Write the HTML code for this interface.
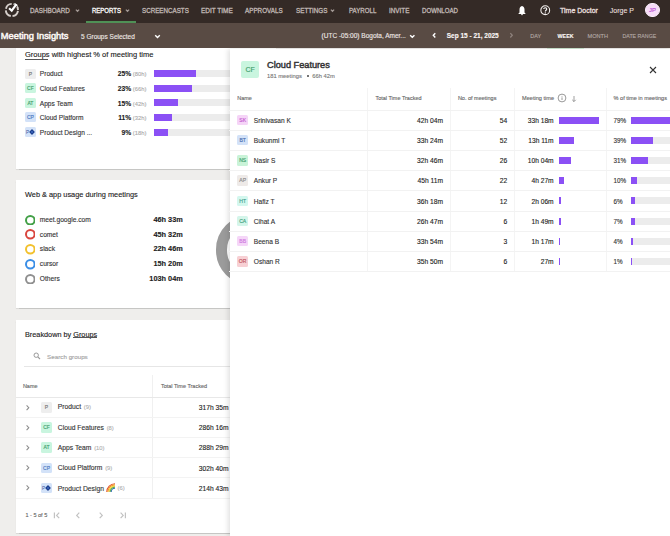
<!DOCTYPE html>
<html><head><meta charset="utf-8">
<style>
*{box-sizing:border-box;margin:0;padding:0}
html,body{width:670px;height:536px;overflow:hidden;background:#efeeec;font-family:"Liberation Sans",sans-serif;color:#222;position:relative}
.abs{position:absolute}
.t{position:absolute;white-space:nowrap;-webkit-text-stroke:0.12px currentColor}
</style></head><body>
<div class="abs" style="left:16.00px;top:40.00px;width:260.00px;height:129.00px;background:#fff;box-shadow:0 0.8px 1px rgba(0,0,0,0.17)"></div>
<div class="abs" style="left:16.00px;top:179.70px;width:260.00px;height:128.40px;background:#fff;box-shadow:0 0.8px 1px rgba(0,0,0,0.17)"></div>
<div class="abs" style="left:16.00px;top:319.70px;width:260.00px;height:213.50px;background:#fff;box-shadow:0 0.8px 1px rgba(0,0,0,0.17)"></div>
<div class="t" style="left:25.00px;top:50.00px;font-size:7.5px;line-height:10px;font-weight:normal;color:#222;">Groups with highest % of meeting time</div>
<div class="abs" style="left:25.00px;top:58.80px;width:23.30px;height:0.75px;background:#555;"></div>
<div class="abs" style="left:24.90px;top:68.60px;width:11px;height:10px;background:#eeeeee;color:#777;font-size:5.0px;line-height:10.6px;text-align:center;border-radius:1.5px;-webkit-text-stroke:0.15px #777">P</div>
<div class="t" style="left:39.80px;top:69.40px;font-size:6.6px;line-height:10px;font-weight:normal;color:#333;">Product</div>
<div class="t" style="right:538.80px;top:69.40px;font-size:6.7px;line-height:10px;font-weight:bold;color:#222;">25%</div>
<div class="t" style="left:132.80px;top:69.40px;font-size:5.8px;line-height:10px;font-weight:normal;color:#aaa;">(80h)</div>
<div class="abs" style="left:154.20px;top:70.10px;width:80.00px;height:7.00px;background:#ececec;"></div>
<div class="abs" style="left:154.20px;top:70.10px;width:41.60px;height:7.00px;background:#8b50f5;"></div>
<div class="abs" style="left:24.90px;top:83.23px;width:11px;height:10px;background:#c9f5df;color:#3f9e6c;font-size:5.0px;line-height:10.6px;text-align:center;border-radius:1.5px;-webkit-text-stroke:0.15px #3f9e6c">CF</div>
<div class="t" style="left:39.80px;top:84.03px;font-size:6.6px;line-height:10px;font-weight:normal;color:#333;">Cloud Features</div>
<div class="t" style="right:538.80px;top:84.03px;font-size:6.7px;line-height:10px;font-weight:bold;color:#222;">23%</div>
<div class="t" style="left:132.80px;top:84.03px;font-size:5.8px;line-height:10px;font-weight:normal;color:#aaa;">(66h)</div>
<div class="abs" style="left:154.20px;top:84.73px;width:80.00px;height:7.00px;background:#ececec;"></div>
<div class="abs" style="left:154.20px;top:84.73px;width:38.10px;height:7.00px;background:#8b50f5;"></div>
<div class="abs" style="left:24.90px;top:97.86px;width:11px;height:10px;background:#c9f5df;color:#3f9e6c;font-size:5.0px;line-height:10.6px;text-align:center;border-radius:1.5px;-webkit-text-stroke:0.15px #3f9e6c">AT</div>
<div class="t" style="left:39.80px;top:98.66px;font-size:6.6px;line-height:10px;font-weight:normal;color:#333;">Apps Team</div>
<div class="t" style="right:538.80px;top:98.66px;font-size:6.7px;line-height:10px;font-weight:bold;color:#222;">15%</div>
<div class="t" style="left:132.80px;top:98.66px;font-size:5.8px;line-height:10px;font-weight:normal;color:#aaa;">(42h)</div>
<div class="abs" style="left:154.20px;top:99.36px;width:80.00px;height:7.00px;background:#ececec;"></div>
<div class="abs" style="left:154.20px;top:99.36px;width:23.80px;height:7.00px;background:#8b50f5;"></div>
<div class="abs" style="left:24.90px;top:112.49px;width:11px;height:10px;background:#d3e2f8;color:#4a78c0;font-size:5.0px;line-height:10.6px;text-align:center;border-radius:1.5px;-webkit-text-stroke:0.15px #4a78c0">CP</div>
<div class="t" style="left:39.80px;top:113.29px;font-size:6.6px;line-height:10px;font-weight:normal;color:#333;">Cloud Platform</div>
<div class="t" style="right:538.80px;top:113.29px;font-size:6.7px;line-height:10px;font-weight:bold;color:#222;">11%</div>
<div class="t" style="left:132.80px;top:113.29px;font-size:5.8px;line-height:10px;font-weight:normal;color:#aaa;">(32h)</div>
<div class="abs" style="left:154.20px;top:113.99px;width:80.00px;height:7.00px;background:#ececec;"></div>
<div class="abs" style="left:154.20px;top:113.99px;width:17.50px;height:7.00px;background:#8b50f5;"></div>
<div class="abs" style="left:24.90px;top:127.12px;width:11px;height:10px;background:#d3e2f8;color:#2d5fc0;font-size:5.0px;line-height:10.6px;text-align:center;border-radius:1.5px;-webkit-text-stroke:0.15px #2d5fc0"><svg width='11' height='10' viewBox='0 0 11 10' style='position:absolute;left:0;top:0'><text x='0.9' y='7.2' font-size='4.6' fill='#3a5a9a' font-family='Liberation Sans'>P</text><path d='M7 2.1 L9.9 5 L7 7.9 L4.1 5 Z' fill='#1c3f8f'/><path d='M7 3.9 L8.1 5 L7 6.1 L5.9 5 Z' fill='#4a78d0'/></svg></div>
<div class="t" style="left:39.80px;top:127.92px;font-size:6.6px;line-height:10px;font-weight:normal;color:#333;">Product Design ...</div>
<div class="t" style="right:538.80px;top:127.92px;font-size:6.7px;line-height:10px;font-weight:bold;color:#222;">9%</div>
<div class="t" style="left:132.80px;top:127.92px;font-size:5.8px;line-height:10px;font-weight:normal;color:#aaa;">(18h)</div>
<div class="abs" style="left:154.20px;top:128.62px;width:80.00px;height:7.00px;background:#ececec;"></div>
<div class="abs" style="left:154.20px;top:128.62px;width:14.20px;height:7.00px;background:#8b50f5;"></div>
<div class="t" style="left:25.00px;top:190.40px;font-size:7.37px;line-height:10px;font-weight:normal;color:#222;">Web &amp; app usage during meetings</div>
<svg class="abs" style="left:24.6px;top:214.70px" width="10.6" height="10.6" viewBox="0 0 10.6 10.6"><circle cx="5.3" cy="5.3" r="4.3" fill="none" stroke="#43a047" stroke-width="2"/></svg>
<div class="t" style="left:39.80px;top:215.10px;font-size:6.67px;line-height:10px;font-weight:normal;color:#333;">meet.google.com</div>
<div class="t" style="right:487.20px;top:215.10px;font-size:7.35px;line-height:10px;font-weight:bold;color:#222;">46h 33m</div>
<svg class="abs" style="left:24.6px;top:229.48px" width="10.6" height="10.6" viewBox="0 0 10.6 10.6"><circle cx="5.3" cy="5.3" r="4.3" fill="none" stroke="#d9463e" stroke-width="2"/></svg>
<div class="t" style="left:39.80px;top:229.77px;font-size:6.67px;line-height:10px;font-weight:normal;color:#333;">comet</div>
<div class="t" style="right:487.20px;top:229.77px;font-size:7.35px;line-height:10px;font-weight:bold;color:#222;">45h 32m</div>
<svg class="abs" style="left:24.6px;top:244.26px" width="10.6" height="10.6" viewBox="0 0 10.6 10.6"><circle cx="5.3" cy="5.3" r="4.3" fill="none" stroke="#f2c12e" stroke-width="2"/></svg>
<div class="t" style="left:39.80px;top:244.44px;font-size:6.67px;line-height:10px;font-weight:normal;color:#333;">slack</div>
<div class="t" style="right:487.20px;top:244.44px;font-size:7.35px;line-height:10px;font-weight:bold;color:#222;">22h 46m</div>
<svg class="abs" style="left:24.6px;top:259.04px" width="10.6" height="10.6" viewBox="0 0 10.6 10.6"><circle cx="5.3" cy="5.3" r="4.3" fill="none" stroke="#3a8ee6" stroke-width="2"/></svg>
<div class="t" style="left:39.80px;top:259.11px;font-size:6.67px;line-height:10px;font-weight:normal;color:#333;">cursor</div>
<div class="t" style="right:487.20px;top:259.11px;font-size:7.35px;line-height:10px;font-weight:bold;color:#222;">15h 20m</div>
<svg class="abs" style="left:24.6px;top:273.82px" width="10.6" height="10.6" viewBox="0 0 10.6 10.6"><circle cx="5.3" cy="5.3" r="4.3" fill="none" stroke="#909090" stroke-width="2"/></svg>
<div class="t" style="left:39.80px;top:273.78px;font-size:6.67px;line-height:10px;font-weight:normal;color:#333;">Others</div>
<div class="t" style="right:487.20px;top:273.78px;font-size:7.35px;line-height:10px;font-weight:bold;color:#222;">103h 04m</div>
<div class="abs" style="left:215.9px;top:215.4px;width:69.6px;height:69.6px;border-radius:50%;border:11.6px solid #9b9b9b"></div>
<div class="t" style="left:25.00px;top:329.50px;font-size:7.3px;line-height:10px;font-weight:normal;color:#222;">Breakdown by Groups</div>
<div class="abs" style="left:73.40px;top:337.40px;width:23.60px;height:0.75px;background:#555;"></div>
<svg class="abs" style="left:33px;top:352px" width="8" height="8" viewBox="0 0 8 8"><circle cx="3.2" cy="3.2" r="2.2" fill="none" stroke="#999" stroke-width="1"/><path d="M4.8 4.8 L7 7" stroke="#999" stroke-width="1.1"/></svg>
<div class="t" style="left:47.10px;top:351.80px;font-size:6.26px;line-height:10px;font-weight:normal;color:#a6a6a6;-webkit-text-stroke:0.15px #a6a6a6">Search groups</div>
<div class="abs" style="left:24.00px;top:366.30px;width:240.00px;height:0.70px;background:#e6e6e6;"></div>
<div class="t" style="left:22.90px;top:381.20px;font-size:5.5px;line-height:10px;font-weight:normal;color:#666;">Name</div>
<div class="t" style="left:160.90px;top:381.20px;font-size:5.5px;line-height:10px;font-weight:normal;color:#666;">Total Time Tracked</div>
<div class="abs" style="left:152.00px;top:374.50px;width:0.70px;height:123.30px;background:#f0f0f0;"></div>
<div class="abs" style="left:16.00px;top:397.10px;width:240.00px;height:0.70px;background:#e8e8e8;"></div>
<svg class="abs" style="left:23.50px;top:403.80px" width="7.4" height="7.4" viewBox="0 0 7.4 7.4"><path d="M2.59 1.295 L4.8100000000000005 3.7 L2.59 6.1049999999999995" fill="none" stroke="#8c8c8c" stroke-width="1.05"/></svg>
<div class="abs" style="left:41.10px;top:402.20px;width:10.8px;height:10.4px;background:#eeeeee;color:#777;font-size:5.0px;line-height:11.0px;text-align:center;border-radius:1.5px;-webkit-text-stroke:0.15px #777">P</div>
<div class="t" style="left:57.8px;top:402.40px;font-size:6.75px;line-height:10px;color:#333">Product <span style="font-size:5.8px;color:#b0b0b0;margin-left:0.8px">(9)</span></div>
<div class="t" style="right:441.50px;top:403.20px;font-size:6.7px;line-height:10px;font-weight:normal;color:#222;">317h 35m</div>
<div class="abs" style="left:16.00px;top:417.10px;width:240.00px;height:0.70px;background:#f3f3f3;"></div>
<svg class="abs" style="left:23.50px;top:423.90px" width="7.4" height="7.4" viewBox="0 0 7.4 7.4"><path d="M2.59 1.295 L4.8100000000000005 3.7 L2.59 6.1049999999999995" fill="none" stroke="#8c8c8c" stroke-width="1.05"/></svg>
<div class="abs" style="left:41.10px;top:422.30px;width:10.8px;height:10.4px;background:#c9f5df;color:#3f9e6c;font-size:5.0px;line-height:11.0px;text-align:center;border-radius:1.5px;-webkit-text-stroke:0.15px #3f9e6c">CF</div>
<div class="t" style="left:57.8px;top:422.50px;font-size:6.75px;line-height:10px;color:#333">Cloud Features <span style="font-size:5.8px;color:#b0b0b0;margin-left:0.8px">(8)</span></div>
<div class="t" style="right:441.50px;top:423.30px;font-size:6.7px;line-height:10px;font-weight:normal;color:#222;">286h 16m</div>
<div class="abs" style="left:16.00px;top:437.20px;width:240.00px;height:0.70px;background:#f3f3f3;"></div>
<svg class="abs" style="left:23.50px;top:444.00px" width="7.4" height="7.4" viewBox="0 0 7.4 7.4"><path d="M2.59 1.295 L4.8100000000000005 3.7 L2.59 6.1049999999999995" fill="none" stroke="#8c8c8c" stroke-width="1.05"/></svg>
<div class="abs" style="left:41.10px;top:442.40px;width:10.8px;height:10.4px;background:#c9f5df;color:#3f9e6c;font-size:5.0px;line-height:11.0px;text-align:center;border-radius:1.5px;-webkit-text-stroke:0.15px #3f9e6c">AT</div>
<div class="t" style="left:57.8px;top:442.60px;font-size:6.75px;line-height:10px;color:#333">Apps Team <span style="font-size:5.8px;color:#b0b0b0;margin-left:0.8px">(10)</span></div>
<div class="t" style="right:441.50px;top:443.40px;font-size:6.7px;line-height:10px;font-weight:normal;color:#222;">288h 29m</div>
<div class="abs" style="left:16.00px;top:457.30px;width:240.00px;height:0.70px;background:#f3f3f3;"></div>
<svg class="abs" style="left:23.50px;top:464.10px" width="7.4" height="7.4" viewBox="0 0 7.4 7.4"><path d="M2.59 1.295 L4.8100000000000005 3.7 L2.59 6.1049999999999995" fill="none" stroke="#8c8c8c" stroke-width="1.05"/></svg>
<div class="abs" style="left:41.10px;top:462.50px;width:10.8px;height:10.4px;background:#d3e2f8;color:#4a78c0;font-size:5.0px;line-height:11.0px;text-align:center;border-radius:1.5px;-webkit-text-stroke:0.15px #4a78c0">CP</div>
<div class="t" style="left:57.8px;top:462.70px;font-size:6.75px;line-height:10px;color:#333">Cloud Platform <span style="font-size:5.8px;color:#b0b0b0;margin-left:0.8px">(9)</span></div>
<div class="t" style="right:441.50px;top:463.50px;font-size:6.7px;line-height:10px;font-weight:normal;color:#222;">302h 40m</div>
<div class="abs" style="left:16.00px;top:477.40px;width:240.00px;height:0.70px;background:#f3f3f3;"></div>
<svg class="abs" style="left:23.50px;top:484.20px" width="7.4" height="7.4" viewBox="0 0 7.4 7.4"><path d="M2.59 1.295 L4.8100000000000005 3.7 L2.59 6.1049999999999995" fill="none" stroke="#8c8c8c" stroke-width="1.05"/></svg>
<div class="abs" style="left:41.10px;top:482.60px;width:10.8px;height:10.4px;background:#d3e2f8;color:#2d5fc0;font-size:5.0px;line-height:11.0px;text-align:center;border-radius:1.5px;-webkit-text-stroke:0.15px #2d5fc0"><svg width='11' height='10' viewBox='0 0 11 10' style='position:absolute;left:0;top:0'><text x='0.9' y='7.2' font-size='4.6' fill='#3a5a9a' font-family='Liberation Sans'>P</text><path d='M7 2.1 L9.9 5 L7 7.9 L4.1 5 Z' fill='#1c3f8f'/><path d='M7 3.9 L8.1 5 L7 6.1 L5.9 5 Z' fill='#4a78d0'/></svg></div>
<div class="t" style="left:57.8px;top:482.80px;font-size:6.75px;line-height:10px;color:#333">Product Design <svg width="9" height="9" viewBox="0 0 9 9" style="vertical-align:-1.5px"><path d="M0.8 9 A8.2 8.2 0 0 1 9 0.8" fill="none" stroke="#e0502a" stroke-width="1.1"/><path d="M1.9 9 A7.1 7.1 0 0 1 9 1.9" fill="none" stroke="#f39a2b" stroke-width="1.1"/><path d="M3 9 A6 6 0 0 1 9 3" fill="none" stroke="#f5d33a" stroke-width="1.1"/><path d="M4.1 9 A4.9 4.9 0 0 1 9 4.1" fill="none" stroke="#5fae4a" stroke-width="1.1"/><path d="M5.2 9 A3.8 3.8 0 0 1 9 5.2" fill="none" stroke="#2f6fb0" stroke-width="1.1"/></svg> <span style="font-size:5.8px;color:#b0b0b0;margin-left:0.8px">(6)</span></div>
<div class="t" style="right:441.50px;top:483.60px;font-size:6.7px;line-height:10px;font-weight:normal;color:#222;">214h 43m</div>
<div class="abs" style="left:16.00px;top:497.50px;width:240.00px;height:0.70px;background:#f3f3f3;"></div>
<div class="t" style="left:25.50px;top:510.10px;font-size:5.5px;line-height:10px;font-weight:normal;color:#666;">1 - 5 of 5</div>
<svg class="abs" style="left:52px;top:511px" width="10" height="9" viewBox="0 0 10 9"><path d="M2.4 1.5 V7.3" stroke="#c2c2c2" stroke-width="1.2"/><path d="M7.2 1.6 L4.6 4.4 L7.2 7.2" fill="none" stroke="#c2c2c2" stroke-width="1.2"/></svg>
<svg class="abs" style="left:74px;top:511px" width="8" height="9" viewBox="0 0 8 9"><path d="M5.3 1.6 L2.7 4.4 L5.3 7.2" fill="none" stroke="#c2c2c2" stroke-width="1.2"/></svg>
<svg class="abs" style="left:96.5px;top:511px" width="8" height="9" viewBox="0 0 8 9"><path d="M2.7 1.6 L5.3 4.4 L2.7 7.2" fill="none" stroke="#c2c2c2" stroke-width="1.2"/></svg>
<svg class="abs" style="left:118px;top:511px" width="10" height="9" viewBox="0 0 10 9"><path d="M7.4 1.5 V7.3" stroke="#c2c2c2" stroke-width="1.2"/><path d="M2.6 1.6 L5.2 4.4 L2.6 7.2" fill="none" stroke="#c2c2c2" stroke-width="1.2"/></svg>
<div class="abs" style="left:229.7px;top:48.5px;width:441px;height:488px;background:#fff;box-shadow:-2px 0 5px rgba(0,0,0,0.12)"></div>
<div class="abs" style="left:241.30px;top:60.95px;width:17.7px;height:17.5px;background:#c9f5df;color:#3f9e6c;font-size:7.0px;line-height:18.1px;text-align:center;border-radius:1.5px;border-radius:2px;-webkit-text-stroke:0.15px #3f9e6c">CF</div>
<div class="t" style="left:267.00px;top:60.20px;font-size:9.2px;line-height:10px;font-weight:normal;color:#333;-webkit-text-stroke:0.45px #333">Cloud Features</div>
<div class="t" style="left:267.00px;top:71.30px;font-size:5.8px;line-height:10px;font-weight:normal;color:#777;">181 meetings</div>
<div class="abs" style="left:306.50px;top:75.20px;width:2.00px;height:2.00px;background:#444;border-radius:50%"></div>
<div class="t" style="left:312.20px;top:71.30px;font-size:5.8px;line-height:10px;font-weight:normal;color:#777;">66h 42m</div>
<svg class="abs" style="left:648.5px;top:66px" width="8" height="8" viewBox="0 0 8 8"><path d="M1 1 L7 7 M7 1 L1 7" stroke="#333" stroke-width="1.1"/></svg>
<div class="abs" style="left:366.95px;top:87.70px;width:0.70px;height:183.80px;background:#f4f4f4;"></div>
<div class="abs" style="left:449.85px;top:87.70px;width:0.70px;height:183.80px;background:#f4f4f4;"></div>
<div class="abs" style="left:514.25px;top:87.70px;width:0.70px;height:183.80px;background:#f4f4f4;"></div>
<div class="abs" style="left:606.25px;top:87.70px;width:0.70px;height:183.80px;background:#f4f4f4;"></div>
<div class="t" style="left:237.20px;top:93.10px;font-size:5.5px;line-height:10px;font-weight:normal;color:#666;">Name</div>
<div class="t" style="left:375.40px;top:93.10px;font-size:5.5px;line-height:10px;font-weight:normal;color:#666;">Total Time Tracked</div>
<div class="t" style="left:457.90px;top:93.10px;font-size:5.5px;line-height:10px;font-weight:normal;color:#666;">No. of meetings</div>
<div class="t" style="left:522.00px;top:93.10px;font-size:5.6px;line-height:10px;font-weight:normal;color:#666;">Meeting time</div>
<svg class="abs" style="left:556.9px;top:93.1px" width="10" height="10" viewBox="0 0 10 10"><circle cx="5" cy="5" r="3.9" fill="none" stroke="#777" stroke-width="0.75"/><path d="M5 4.4 V7" stroke="#777" stroke-width="0.75"/><circle cx="5" cy="3.2" r="0.45" fill="#777"/></svg>
<svg class="abs" style="left:571.4px;top:94.5px" width="6" height="8" viewBox="0 0 6 8"><path d="M3 1 V6.5 M1.2 4.8 L3 6.6 L4.8 4.8" fill="none" stroke="#777" stroke-width="0.7"/></svg>
<div class="t" style="left:613.50px;top:93.10px;font-size:5.6px;line-height:10px;font-weight:normal;color:#666;">% of time in meetings</div>
<div class="abs" style="left:229.30px;top:109.50px;width:441.00px;height:0.70px;background:#f2f2f2;"></div>
<div class="abs" style="left:237.20px;top:114.80px;width:11px;height:10.4px;background:#f5d4f7;color:#c35ad0;font-size:5.1px;line-height:11.0px;text-align:center;border-radius:1.5px;-webkit-text-stroke:0.15px #c35ad0">SK</div>
<div class="t" style="left:253.80px;top:115.80px;font-size:6.6px;line-height:10px;font-weight:normal;color:#333;">Srinivasan K</div>
<div class="t" style="right:227.00px;top:115.80px;font-size:6.7px;line-height:10px;font-weight:normal;color:#222;">42h 04m</div>
<div class="t" style="right:162.80px;top:115.80px;font-size:6.7px;line-height:10px;font-weight:normal;color:#222;">54</div>
<div class="t" style="right:116.40px;top:115.80px;font-size:6.65px;line-height:10px;font-weight:normal;color:#222;">33h 18m</div>
<div class="abs" style="left:559.10px;top:116.50px;width:39.60px;height:7.00px;background:#8b50f5;"></div>
<div class="t" style="left:613.50px;top:115.80px;font-size:6.3px;line-height:10px;font-weight:normal;color:#333;">79%</div>
<div class="abs" style="left:631.40px;top:116.50px;width:56.00px;height:7.00px;background:#ececec;"></div>
<div class="abs" style="left:631.40px;top:116.50px;width:44.00px;height:7.00px;background:#8b50f5;"></div>
<div class="abs" style="left:229.30px;top:129.75px;width:441.00px;height:0.70px;background:#f2f2f2;"></div>
<div class="abs" style="left:237.20px;top:135.00px;width:11px;height:10.4px;background:#d3e2f8;color:#4a6fb0;font-size:5.1px;line-height:11.0px;text-align:center;border-radius:1.5px;-webkit-text-stroke:0.15px #4a6fb0">BT</div>
<div class="t" style="left:253.80px;top:136.00px;font-size:6.6px;line-height:10px;font-weight:normal;color:#333;">Bukunmi T</div>
<div class="t" style="right:227.00px;top:136.00px;font-size:6.7px;line-height:10px;font-weight:normal;color:#222;">33h 24m</div>
<div class="t" style="right:162.80px;top:136.00px;font-size:6.7px;line-height:10px;font-weight:normal;color:#222;">52</div>
<div class="t" style="right:116.40px;top:136.00px;font-size:6.65px;line-height:10px;font-weight:normal;color:#222;">13h 11m</div>
<div class="abs" style="left:559.10px;top:136.70px;width:15.10px;height:7.00px;background:#8b50f5;"></div>
<div class="t" style="left:613.50px;top:136.00px;font-size:6.3px;line-height:10px;font-weight:normal;color:#333;">39%</div>
<div class="abs" style="left:631.40px;top:136.70px;width:56.00px;height:7.00px;background:#ececec;"></div>
<div class="abs" style="left:631.40px;top:136.70px;width:21.80px;height:7.00px;background:#8b50f5;"></div>
<div class="abs" style="left:229.30px;top:149.95px;width:441.00px;height:0.70px;background:#f2f2f2;"></div>
<div class="abs" style="left:237.20px;top:155.20px;width:11px;height:10.4px;background:#c9f3d8;color:#3f9e6c;font-size:5.1px;line-height:11.0px;text-align:center;border-radius:1.5px;-webkit-text-stroke:0.15px #3f9e6c">NS</div>
<div class="t" style="left:253.80px;top:156.20px;font-size:6.6px;line-height:10px;font-weight:normal;color:#333;">Nasir S</div>
<div class="t" style="right:227.00px;top:156.20px;font-size:6.7px;line-height:10px;font-weight:normal;color:#222;">32h 46m</div>
<div class="t" style="right:162.80px;top:156.20px;font-size:6.7px;line-height:10px;font-weight:normal;color:#222;">26</div>
<div class="t" style="right:116.40px;top:156.20px;font-size:6.65px;line-height:10px;font-weight:normal;color:#222;">10h 04m</div>
<div class="abs" style="left:559.10px;top:156.90px;width:11.70px;height:7.00px;background:#8b50f5;"></div>
<div class="t" style="left:613.50px;top:156.20px;font-size:6.3px;line-height:10px;font-weight:normal;color:#333;">31%</div>
<div class="abs" style="left:631.40px;top:156.90px;width:56.00px;height:7.00px;background:#ececec;"></div>
<div class="abs" style="left:631.40px;top:156.90px;width:16.80px;height:7.00px;background:#8b50f5;"></div>
<div class="abs" style="left:229.30px;top:170.15px;width:441.00px;height:0.70px;background:#f2f2f2;"></div>
<div class="abs" style="left:237.20px;top:175.40px;width:11px;height:10.4px;background:#eeeae8;color:#888;font-size:5.1px;line-height:11.0px;text-align:center;border-radius:1.5px;-webkit-text-stroke:0.15px #888">AP</div>
<div class="t" style="left:253.80px;top:176.40px;font-size:6.6px;line-height:10px;font-weight:normal;color:#333;">Ankur P</div>
<div class="t" style="right:227.00px;top:176.40px;font-size:6.7px;line-height:10px;font-weight:normal;color:#222;">45h 11m</div>
<div class="t" style="right:162.80px;top:176.40px;font-size:6.7px;line-height:10px;font-weight:normal;color:#222;">22</div>
<div class="t" style="right:116.40px;top:176.40px;font-size:6.65px;line-height:10px;font-weight:normal;color:#222;">4h 27m</div>
<div class="abs" style="left:559.10px;top:177.10px;width:5.00px;height:7.00px;background:#8b50f5;"></div>
<div class="t" style="left:613.50px;top:176.40px;font-size:6.3px;line-height:10px;font-weight:normal;color:#333;">10%</div>
<div class="abs" style="left:631.40px;top:177.10px;width:56.00px;height:7.00px;background:#ececec;"></div>
<div class="abs" style="left:631.40px;top:177.10px;width:5.60px;height:7.00px;background:#8b50f5;"></div>
<div class="abs" style="left:229.30px;top:190.35px;width:441.00px;height:0.70px;background:#f2f2f2;"></div>
<div class="abs" style="left:237.20px;top:195.60px;width:11px;height:10.4px;background:#d3f7ee;color:#3f9e8c;font-size:5.1px;line-height:11.0px;text-align:center;border-radius:1.5px;-webkit-text-stroke:0.15px #3f9e8c">HT</div>
<div class="t" style="left:253.80px;top:196.60px;font-size:6.6px;line-height:10px;font-weight:normal;color:#333;">Hafiz T</div>
<div class="t" style="right:227.00px;top:196.60px;font-size:6.7px;line-height:10px;font-weight:normal;color:#222;">36h 18m</div>
<div class="t" style="right:162.80px;top:196.60px;font-size:6.7px;line-height:10px;font-weight:normal;color:#222;">12</div>
<div class="t" style="right:116.40px;top:196.60px;font-size:6.65px;line-height:10px;font-weight:normal;color:#222;">2h 06m</div>
<div class="abs" style="left:559.10px;top:197.30px;width:2.00px;height:7.00px;background:#8b50f5;"></div>
<div class="t" style="left:613.50px;top:196.60px;font-size:6.3px;line-height:10px;font-weight:normal;color:#333;">6%</div>
<div class="abs" style="left:631.40px;top:197.30px;width:56.00px;height:7.00px;background:#ececec;"></div>
<div class="abs" style="left:631.40px;top:197.30px;width:3.30px;height:7.00px;background:#8b50f5;"></div>
<div class="abs" style="left:229.30px;top:210.55px;width:441.00px;height:0.70px;background:#f2f2f2;"></div>
<div class="abs" style="left:237.20px;top:215.80px;width:11px;height:10.4px;background:#d4f5ea;color:#3f9e7c;font-size:5.1px;line-height:11.0px;text-align:center;border-radius:1.5px;-webkit-text-stroke:0.15px #3f9e7c">CA</div>
<div class="t" style="left:253.80px;top:216.80px;font-size:6.6px;line-height:10px;font-weight:normal;color:#333;">Cihat A</div>
<div class="t" style="right:227.00px;top:216.80px;font-size:6.7px;line-height:10px;font-weight:normal;color:#222;">26h 47m</div>
<div class="t" style="right:162.80px;top:216.80px;font-size:6.7px;line-height:10px;font-weight:normal;color:#222;">6</div>
<div class="t" style="right:116.40px;top:216.80px;font-size:6.65px;line-height:10px;font-weight:normal;color:#222;">1h 49m</div>
<div class="abs" style="left:559.10px;top:217.50px;width:2.00px;height:7.00px;background:#8b50f5;"></div>
<div class="t" style="left:613.50px;top:216.80px;font-size:6.3px;line-height:10px;font-weight:normal;color:#333;">7%</div>
<div class="abs" style="left:631.40px;top:217.50px;width:56.00px;height:7.00px;background:#ececec;"></div>
<div class="abs" style="left:631.40px;top:217.50px;width:4.00px;height:7.00px;background:#8b50f5;"></div>
<div class="abs" style="left:229.30px;top:230.75px;width:441.00px;height:0.70px;background:#f2f2f2;"></div>
<div class="abs" style="left:237.20px;top:236.00px;width:11px;height:10.4px;background:#f5d6f8;color:#d07ae0;font-size:5.1px;line-height:11.0px;text-align:center;border-radius:1.5px;-webkit-text-stroke:0.15px #d07ae0">BB</div>
<div class="t" style="left:253.80px;top:237.00px;font-size:6.6px;line-height:10px;font-weight:normal;color:#333;">Beena B</div>
<div class="t" style="right:227.00px;top:237.00px;font-size:6.7px;line-height:10px;font-weight:normal;color:#222;">33h 54m</div>
<div class="t" style="right:162.80px;top:237.00px;font-size:6.7px;line-height:10px;font-weight:normal;color:#222;">3</div>
<div class="t" style="right:116.40px;top:237.00px;font-size:6.65px;line-height:10px;font-weight:normal;color:#222;">1h 17m</div>
<div class="abs" style="left:559.10px;top:237.70px;width:1.20px;height:7.00px;background:#8b50f5;"></div>
<div class="t" style="left:613.50px;top:237.00px;font-size:6.3px;line-height:10px;font-weight:normal;color:#333;">4%</div>
<div class="abs" style="left:631.40px;top:237.70px;width:56.00px;height:7.00px;background:#ececec;"></div>
<div class="abs" style="left:631.40px;top:237.70px;width:1.60px;height:7.00px;background:#8b50f5;"></div>
<div class="abs" style="left:229.30px;top:250.95px;width:441.00px;height:0.70px;background:#f2f2f2;"></div>
<div class="abs" style="left:237.20px;top:256.20px;width:11px;height:10.4px;background:#f7d0d4;color:#c0505a;font-size:5.1px;line-height:11.0px;text-align:center;border-radius:1.5px;-webkit-text-stroke:0.15px #c0505a">OR</div>
<div class="t" style="left:253.80px;top:257.20px;font-size:6.6px;line-height:10px;font-weight:normal;color:#333;">Oshan R</div>
<div class="t" style="right:227.00px;top:257.20px;font-size:6.7px;line-height:10px;font-weight:normal;color:#222;">35h 50m</div>
<div class="t" style="right:162.80px;top:257.20px;font-size:6.7px;line-height:10px;font-weight:normal;color:#222;">6</div>
<div class="t" style="right:116.40px;top:257.20px;font-size:6.65px;line-height:10px;font-weight:normal;color:#222;">27m</div>
<div class="abs" style="left:559.10px;top:257.90px;width:0.70px;height:7.00px;background:#8b50f5;"></div>
<div class="t" style="left:613.50px;top:257.20px;font-size:6.3px;line-height:10px;font-weight:normal;color:#333;">1%</div>
<div class="abs" style="left:631.40px;top:257.90px;width:56.00px;height:7.00px;background:#ececec;"></div>
<div class="abs" style="left:631.40px;top:257.90px;width:0.80px;height:7.00px;background:#8b50f5;"></div>
<div class="abs" style="left:229.30px;top:271.15px;width:441.00px;height:0.70px;background:#f2f2f2;"></div>
<div class="abs" style="left:0.00px;top:0.00px;width:670.00px;height:22.60px;background:#342a26;"></div>
<svg class="abs" style="left:0px;top:0px" width="24" height="22" viewBox="0 0 24 22">
<circle cx="11.9" cy="10" r="6.1" fill="none" stroke="#d6cfcb" stroke-width="1.9" stroke-dasharray="7.75 1.83" stroke-dashoffset="-0.91"/>
<path d="M9.1 8.2 L11.7 10.7 L16.3 4.3" fill="none" stroke="#342a26" stroke-width="3.6"/>
<path d="M9.1 8.2 L11.7 10.7 L16.3 4.3" fill="none" stroke="#fff" stroke-width="2.2"/>
<path d="M14.4 3.6 L17.3 5.6" fill="none" stroke="#fff" stroke-width="1.7"/>
<circle cx="17.6" cy="8.1" r="0.8" fill="#d6cfcb"/></svg>
<div class="t" style="left:30.30px;top:6.10px;font-size:6.5px;line-height:10px;font-weight:normal;color:#c2bab6;-webkit-text-stroke:0.28px #c2bab6;transform:scaleX(0.967);transform-origin:0 0">DASHBOARD</div>
<div class="t" style="left:91.50px;top:6.10px;font-size:6.5px;line-height:10px;font-weight:normal;color:#fff;-webkit-text-stroke:0.28px #fff;transform:scaleX(0.925);transform-origin:0 0">REPORTS</div>
<div class="t" style="left:141.50px;top:6.10px;font-size:6.5px;line-height:10px;font-weight:normal;color:#c2bab6;-webkit-text-stroke:0.28px #c2bab6;transform:scaleX(0.960);transform-origin:0 0">SCREENCASTS</div>
<div class="t" style="left:200.60px;top:6.10px;font-size:6.5px;line-height:10px;font-weight:normal;color:#c2bab6;-webkit-text-stroke:0.28px #c2bab6;transform:scaleX(0.994);transform-origin:0 0">EDIT TIME</div>
<div class="t" style="left:244.80px;top:6.10px;font-size:6.5px;line-height:10px;font-weight:normal;color:#c2bab6;-webkit-text-stroke:0.28px #c2bab6;transform:scaleX(0.970);transform-origin:0 0">APPROVALS</div>
<div class="t" style="left:295.50px;top:6.10px;font-size:6.5px;line-height:10px;font-weight:normal;color:#c2bab6;-webkit-text-stroke:0.28px #c2bab6;transform:scaleX(0.967);transform-origin:0 0">SETTINGS</div>
<div class="t" style="left:348.70px;top:6.10px;font-size:6.5px;line-height:10px;font-weight:normal;color:#c2bab6;-webkit-text-stroke:0.28px #c2bab6;transform:scaleX(0.940);transform-origin:0 0">PAYROLL</div>
<div class="t" style="left:388.80px;top:6.10px;font-size:6.5px;line-height:10px;font-weight:normal;color:#c2bab6;-webkit-text-stroke:0.28px #c2bab6;transform:scaleX(0.977);transform-origin:0 0">INVITE</div>
<div class="t" style="left:421.80px;top:6.10px;font-size:6.5px;line-height:10px;font-weight:normal;color:#c2bab6;-webkit-text-stroke:0.28px #c2bab6;transform:scaleX(0.938);transform-origin:0 0">DOWNLOAD</div>
<svg class="abs" style="left:74.70px;top:7.70px" width="5.0" height="5.0" viewBox="0 0 5.0 5.0"><path d="M0.875 1.625 L2.5 3.25 L4.125 1.625" fill="none" stroke="#a39995" stroke-width="1.3"/></svg>
<svg class="abs" style="left:124.80px;top:7.70px" width="5.0" height="5.0" viewBox="0 0 5.0 5.0"><path d="M0.875 1.625 L2.5 3.25 L4.125 1.625" fill="none" stroke="#a39995" stroke-width="1.3"/></svg>
<svg class="abs" style="left:330.40px;top:7.70px" width="5.0" height="5.0" viewBox="0 0 5.0 5.0"><path d="M0.875 1.625 L2.5 3.25 L4.125 1.625" fill="none" stroke="#a39995" stroke-width="1.3"/></svg>
<svg class="abs" style="left:516.5px;top:5px" width="10" height="11" viewBox="0 0 10 11"><path d="M5 1 C3.3 1.3 2.5 2.8 2.5 4.6 V7.4 L1.2 8.9 H8.8 L7.5 7.4 V4.6 C7.5 2.8 6.7 1.3 5 1 Z" fill="#fff"/><path d="M4 9.3 H6 V9.8 C6 10.4 4 10.4 4 9.8 Z" fill="#fff"/></svg>
<svg class="abs" style="left:540px;top:5.4px" width="10.5" height="10.5" viewBox="0 0 10.5 10.5"><circle cx="5.25" cy="5.2" r="4.4" fill="none" stroke="#f4f0ee" stroke-width="1.05"/><path d="M3.7 4.1 C3.7 2.3 6.8 2.3 6.8 4.1 C6.8 5.3 5.3 5.2 5.3 6.5" fill="none" stroke="#fff" stroke-width="1.1"/><circle cx="5.3" cy="7.9" r="0.65" fill="#fff"/></svg>
<div class="t" style="left:560.00px;top:6.10px;font-size:7.0px;line-height:10px;font-weight:normal;color:#e6dfdc;-webkit-text-stroke:0.3px #e6dfdc">Time Doctor</div>
<div class="t" style="left:609.80px;top:6.40px;font-size:7px;line-height:10px;font-weight:normal;color:#e6dfdc;">Jorge P</div>
<div class="abs" style="left:645px;top:2.6px;width:14.8px;height:14.8px;border-radius:50%;background:#f7dcf8;border:0.8px solid #fdf2fd;color:#b84ad2;font-size:5.9px;-webkit-text-stroke:0.15px #b84ad2;line-height:13.6px;text-align:center">JP</div>
<div class="abs" style="left:0.00px;top:22.60px;width:670.00px;height:25.90px;background:#594b44;"></div>
<div class="t" style="left:0.80px;top:31.00px;font-size:9.3px;line-height:10px;font-weight:normal;color:#fbf7f5;-webkit-text-stroke:0.5px #fbf7f5">Meeting Insights</div>
<div class="t" style="left:81.00px;top:32.10px;font-size:6.5px;line-height:10px;font-weight:normal;color:#efe9e6;">5 Groups Selected</div>
<svg class="abs" style="left:153.80px;top:32.80px" width="7.0" height="7.0" viewBox="0 0 7.0 7.0"><path d="M1.2249999999999999 2.275 L3.5 4.55 L5.7749999999999995 2.275" fill="none" stroke="#fff" stroke-width="1.4"/></svg>
<div class="t" style="left:321.60px;top:30.70px;font-size:6.5px;line-height:10px;font-weight:normal;color:#efe9e6;">(UTC -05:00) Bogota, Amer...</div>
<svg class="abs" style="left:409.20px;top:32.50px" width="6.6" height="6.6" viewBox="0 0 6.6 6.6"><path d="M1.1549999999999998 2.145 L3.3 4.29 L5.444999999999999 2.145" fill="none" stroke="#fff" stroke-width="1.4"/></svg>
<svg class="abs" style="left:430.70px;top:32.40px" width="6.6" height="6.6" viewBox="0 0 6.6 6.6"><path d="M4.29 1.1549999999999998 L2.3099999999999996 3.3 L4.29 5.444999999999999" fill="none" stroke="#fff" stroke-width="1.4"/></svg>
<div class="t" style="left:446.70px;top:30.80px;font-size:6.5px;line-height:10px;font-weight:bold;color:#fbf7f5;">Sep 15 - 21, 2025</div>
<svg class="abs" style="left:508.30px;top:32.40px" width="6.6" height="6.6" viewBox="0 0 6.6 6.6"><path d="M2.3099999999999996 1.1549999999999998 L4.29 3.3 L2.3099999999999996 5.444999999999999" fill="none" stroke="#8e817c" stroke-width="1.3"/></svg>
<div class="t" style="left:530.20px;top:30.80px;font-size:5.5px;line-height:10px;font-weight:normal;color:#b3a9a5;">DAY</div>
<div class="t" style="left:557.60px;top:30.80px;font-size:5.3px;line-height:10px;font-weight:bold;color:#fbf7f5;">WEEK</div>
<div class="t" style="left:587.50px;top:30.80px;font-size:5.6px;line-height:10px;font-weight:normal;color:#b3a9a5;">MONTH</div>
<div class="t" style="left:622.50px;top:30.80px;font-size:5.25px;line-height:10px;font-weight:normal;color:#b3a9a5;">DATE RANGE</div>
<div class="abs" style="left:547.00px;top:47.60px;width:37.00px;height:1.40px;background:rgba(120,200,140,0.3);"></div>
<div class="abs" style="left:85.80px;top:21.40px;width:50.20px;height:1.80px;background:#4f9156;"></div>
</body></html>
